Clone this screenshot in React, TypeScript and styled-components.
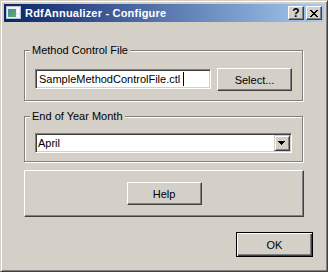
import styled, { createGlobalStyle } from "styled-components";

const face = "#d4d0c8";

const GlobalStyle = createGlobalStyle`
  html, body {
    margin: 0;
    padding: 0;
    background: ${face};
  }
  body {
    font-family: "Liberation Sans", Arial, sans-serif;
    font-size: 11px;
    color: #000;
  }
`;

const Window = styled.div`
  box-sizing: border-box;
  width: 328px;
  height: 272px;
  padding: 3px;
  background: ${face};
  border: 1px solid;
  border-color: ${face} #404040 #404040 ${face};
  box-shadow: inset 1px 1px 0 #fff, inset -1px -1px 0 #808080;
  display: flex;
  flex-direction: column;
`;

const TitleBar = styled.div`
  height: 18px;
  flex: none;
  display: flex;
  align-items: center;
  padding: 0 2px;
  background: linear-gradient(to right, #0a246a, #a6caf0);
  color: #fff;
  font-weight: bold;
  font-size: 11px;
`;

const TitleText = styled.span`
  margin-left: 3px;
  letter-spacing: 0.2px;
  white-space: nowrap;
`;

const CaptionButton = styled.div<{ $first?: boolean }>`
  box-sizing: border-box;
  width: 16px;
  height: 14px;
  margin-left: ${({ $first }) => ($first ? "auto" : "2px")};
  background: ${face};
  border: 1px solid;
  border-color: #fff #404040 #404040 #fff;
  box-shadow: inset -1px -1px 0 #808080;
  display: flex;
  align-items: center;
  justify-content: center;
  color: #000;
  font-size: 12px;
  font-weight: bold;
  line-height: 12px;
`;

const Content = styled.div`
  flex: 1;
  display: flex;
  flex-direction: column;
  padding: 22px 11px 11px 20px;
`;

const GroupBox = styled.fieldset<{ $gap?: number }>`
  margin: ${({ $gap }) => $gap ?? 0}px 10px 0 0;
  padding: 0;
  min-width: 0;
  border: 1px solid #808080;
  box-shadow: 1px 1px 0 #fff, inset 1px 1px 0 #fff;
`;

const Legend = styled.legend`
  margin-left: 5px;
  padding: 0 2px;
  font-size: 11px;
  line-height: 13px;
  background: ${face};
`;

const Row = styled.div<{ $pad: string }>`
  display: flex;
  align-items: flex-start;
  gap: 6px;
  padding: ${({ $pad }) => $pad};
`;

const TextField = styled.div`
  flex: 1;
  box-sizing: border-box;
  height: 20px;
  margin-top: 1px;
  padding: 0 3px;
  background: #fff;
  border: 1px solid;
  border-color: #808080 #fff #fff #808080;
  box-shadow: inset 1px 1px 0 #404040, inset -1px -1px 0 ${face};
  line-height: 18px;
  white-space: nowrap;
  overflow: hidden;
`;

const Caret = styled.span`
  display: inline-block;
  width: 1px;
  height: 14px;
  margin-left: 3px;
  background: #000;
  vertical-align: -3px;
`;

const Button = styled.button`
  box-sizing: border-box;
  width: 75px;
  height: 23px;
  flex: none;
  padding: 0;
  background: ${face};
  border: 1px solid;
  border-color: #fff #404040 #404040 #fff;
  box-shadow: inset -1px -1px 0 #808080;
  font-family: inherit;
  font-size: 11px;
  color: #000;
`;

const DefaultButton = styled(Button)`
  width: 77px;
  height: 25px;
  border-color: #000;
  box-shadow: inset 1px 1px 0 #fff, inset -1px -1px 0 #404040,
    inset -2px -2px 0 #808080;
`;

const Combo = styled.div`
  flex: 1;
  box-sizing: border-box;
  height: 20px;
  padding: 1px;
  display: flex;
  align-items: center;
  background: #fff;
  border: 1px solid;
  border-color: #808080 #fff #fff #808080;
  box-shadow: inset 1px 1px 0 #404040, inset -1px -1px 0 ${face};
`;

const ComboText = styled.span`
  flex: 1;
  padding-left: 1px;
`;

const DropButton = styled.div`
  box-sizing: border-box;
  width: 16px;
  height: 16px;
  flex: none;
  background: ${face};
  border: 1px solid;
  border-color: ${face} #404040 #404040 ${face};
  box-shadow: inset 1px 1px 0 #fff, inset -1px -1px 0 #808080;
  display: flex;
  align-items: center;
  justify-content: center;
  padding-right: 1px;
`;

const Panel = styled.div`
  margin: 8px 9px 0 0;
  padding: 11px 0;
  display: flex;
  justify-content: center;
  border: 1px solid;
  border-color: #fff #404040 #404040 #fff;
  box-shadow: inset -1px -1px 0 #808080;
`;

const Footer = styled.div`
  margin-top: 15px;
  display: flex;
  justify-content: flex-end;
`;

const AppIcon = () => (
  <svg width="16" height="16" viewBox="0 0 16 16" shapeRendering="crispEdges">
    <defs>
      <linearGradient id="ic" x1="0" y1="0" x2="1" y2="1">
        <stop offset="0" stopColor="#3f8f9a" />
        <stop offset="1" stopColor="#6aa86a" />
      </linearGradient>
    </defs>
    <rect x="0" y="1" width="15" height="13" fill="#b8c4d0" />
    <rect x="1" y="2" width="13" height="11" fill="#e8eef4" />
    <rect x="2" y="4" width="8" height="8" fill="url(#ic)" />
    <rect x="11" y="3" width="2" height="5" fill="#fff" />
    <rect x="11" y="10" width="2" height="2" fill="#fff" />
  </svg>
);

const CloseGlyph = () => (
  <svg width="8" height="7" viewBox="0 0 8 7" shapeRendering="crispEdges">
    <path
      fill="#000"
      d="M0 0h2v1H0z M6 0h2v1H6z M1 1h2v1H1z M5 1h2v1H5z M2 2h4v1H2z M3 3h2v1H3z M2 4h4v1H2z M1 5h2v1H1z M5 5h2v1H5z M0 6h2v1H0z M6 6h2v1H6z"
    />
  </svg>
);

const ArrowDown = () => (
  <svg width="7" height="4" viewBox="0 0 7 4" shapeRendering="crispEdges">
    <path fill="#000" d="M0 0h7v1H0z M1 1h5v1H1z M2 2h3v1H2z M3 3h1v1H3z" />
  </svg>
);

const App = () => {
  return (
    <>
      <GlobalStyle />
      <Window>
        <TitleBar>
          <AppIcon />
          <TitleText>RdfAnnualizer - Configure</TitleText>
          <CaptionButton $first>?</CaptionButton>
          <CaptionButton>
            <CloseGlyph />
          </CaptionButton>
        </TitleBar>
        <Content>
          <GroupBox>
            <Legend>Method Control File</Legend>
            <Row $pad="11px 10px 9px 10px">
              <TextField>
                SampleMethodControlFile.ctl
                <Caret />
              </TextField>
              <Button>Select...</Button>
            </Row>
          </GroupBox>
          <GroupBox $gap={9}>
            <Legend>End of Year Month</Legend>
            <Row $pad="10px 10px 8px 10px">
              <Combo>
                <ComboText>April</ComboText>
                <DropButton>
                  <ArrowDown />
                </DropButton>
              </Combo>
            </Row>
          </GroupBox>
          <Panel>
            <Button>Help</Button>
          </Panel>
          <Footer>
            <DefaultButton>OK</DefaultButton>
          </Footer>
        </Content>
      </Window>
    </>
  );
};

export default App;
